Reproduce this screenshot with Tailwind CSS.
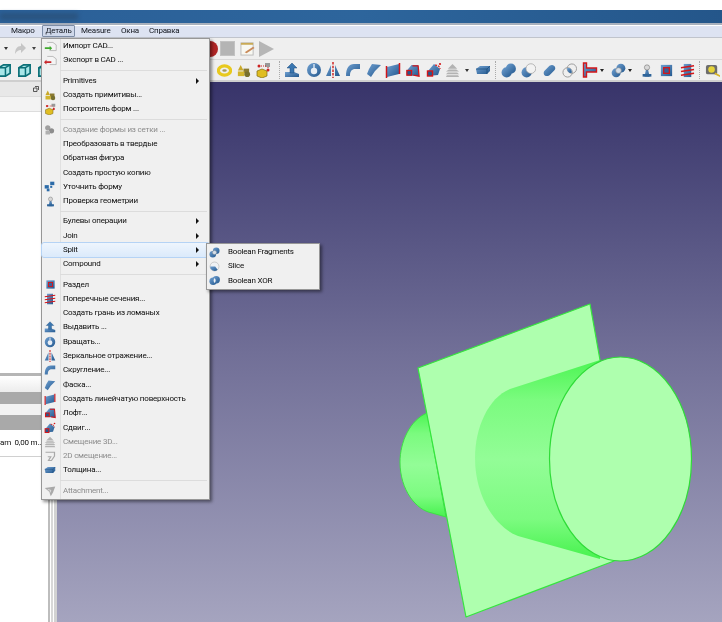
<!DOCTYPE html>
<html lang="ru">
<head>
<meta charset="utf-8">
<script src="https://cdn.jsdelivr.net/npm/@tailwindcss/browser@4"></script>
</head>
<body class="bg-white">
<svg class="absolute w-0 h-0">
<defs>
<linearGradient id="b" x1="0" y1="0" x2="1" y2="1"><stop offset="0" stop-color="#6f9fd0"/><stop offset="1" stop-color="#24598f"/></linearGradient>
<symbol id="cube" viewBox="0 0 16 16"><path d="M2 5 7 2h7v9l-5 3H2z" fill="#a8e6e8" stroke="#0b6f77" stroke-width="1.800"/><path d="M2 5h7v9M9 5l5-3" fill="none" stroke="#0b6f77" stroke-width="1.600"/></symbol>
<symbol id="torus" viewBox="0 0 16 16"><ellipse cx="8" cy="8" rx="6.500" ry="5" fill="none" stroke="#e8c91e" stroke-width="3.400"/><ellipse cx="8" cy="8" rx="2.400" ry="1.400" fill="#a59a5a"/></symbol>
<symbol id="prims" viewBox="0 0 16 16"><path d="M5 2 8 8H2z" fill="#c9a92a"/><rect x="8" y="6" width="6" height="5" fill="#8a7a30"/><rect x="2" y="9" width="7" height="5" fill="#d2b52e"/><circle cx="12" cy="12" r="3" fill="#77702f"/></symbol>
<symbol id="builder" viewBox="0 0 16 16"><path d="M2 9l5-2 5 2v5l-5 2-5-2z" fill="#e0bd22" stroke="#7d6a15" stroke-width=".7"/><rect x="10" y="1" width="5" height="4" fill="#999"/><circle cx="4" cy="4" r="1.500" fill="#c22"/><circle cx="13" cy="8" r="1.500" fill="#c22"/><path d="M4 4h7M13 5v3" stroke="#c22" stroke-dasharray="1 1"/></symbol>
<symbol id="extrude" viewBox="0 0 16 16"><path d="M1 10h9l5 2v3H1z" fill="url(#b)"/><path d="M8 1 3 6h3v5h4V6h3z" fill="#3a76b0" stroke="#1d4d7e" stroke-width=".5"/></symbol>
<symbol id="revolve" viewBox="0 0 16 16"><circle cx="8" cy="8" r="7" fill="url(#b)"/><circle cx="8" cy="9" r="3.200" fill="#e8eef5"/><path d="M8 2v4" stroke="#dfe8f2" stroke-width="1.400"/></symbol>
<symbol id="mirror" viewBox="0 0 16 16"><path d="M1 14 6 3v11zM15 14 10 3v11z" fill="url(#b)"/><path d="M8 0v16" stroke="#cc1a1a" stroke-width="1.400" stroke-dasharray="2.500 1.200"/></symbol>
<symbol id="fillet" viewBox="0 0 16 16"><path d="M15 2H9C4 2 1 6 1 14h4c0-4 1-6 4-7h6z" fill="url(#b)"/></symbol>
<symbol id="chamfer" viewBox="0 0 16 16"><path d="M6 2 15 3 9 9 5 15 1 12 3 7z" fill="url(#b)"/></symbol>
<symbol id="ruled" viewBox="0 0 16 16"><path d="M2 5 14 2v10L2 15z" fill="url(#b)"/><path d="M1.500 4v12M14.500 1v11" stroke="#d3161a" stroke-width="1.500"/></symbol>
<symbol id="loft" viewBox="0 0 16 16"><path d="M2 8 7 2h7l1 12-13-1z" fill="url(#b)"/><path d="M8 3h6l1 11-6-1" fill="none" stroke="#d3161a" stroke-width="1.400"/><rect x="2" y="8" width="5" height="5" fill="#24598f" stroke="#d3161a" stroke-width="1.400"/></symbol>
<symbol id="sweep" viewBox="0 0 16 16"><path d="M2 9 8 2l6 5-2 6-10 1z" fill="url(#b)"/><rect x="1.500" y="9" width="5" height="5" fill="#24598f" stroke="#d3161a" stroke-width="1.400"/><path d="M9 3c3 0 5 2 5 4" fill="none" stroke="#d3161a" stroke-width="1.200" stroke-dasharray="2 1"/><circle cx="14" cy="2" r="1.100" fill="#d3161a"/></symbol>
<symbol id="offset" viewBox="0 0 16 16"><path d="M8 1 3 6h10zM4 7h8l3 2H1zM3 10h10l2 2H1zM2 13h12l1 2H1z" fill="#b3b3b3"/></symbol>
<symbol id="offset2" viewBox="0 0 16 16"><path d="M2 3h12v5l-4 6H6l3-5H5" fill="none" stroke="#a8a8a8" stroke-width="1.600"/></symbol>
<symbol id="thick" viewBox="0 0 16 16"><path d="M1 7l4-3h10v5l-3 3H2z" fill="url(#b)"/><path d="M1 7h11l3-3M12 7v5" fill="none" stroke="#174a7a" stroke-width=".7"/></symbol>
<symbol id="union" viewBox="0 0 16 16"><circle cx="6" cy="10" r="5.400" fill="url(#b)"/><circle cx="10.500" cy="6" r="5.400" fill="url(#b)"/></symbol>
<symbol id="cut" viewBox="0 0 16 16"><circle cx="6" cy="10" r="5.400" fill="url(#b)"/><circle cx="10.500" cy="6" r="5.200" fill="#f2f2f2" stroke="#999" stroke-width=".7"/></symbol>
<symbol id="fuse" viewBox="0 0 16 16"><path d="M3 8 8 3c5-3 8 3 5 5l-5 5C3 16 0 11 3 8z" fill="url(#b)"/></symbol>
<symbol id="common" viewBox="0 0 16 16"><circle cx="6" cy="10" r="5" fill="none" stroke="#999"/><circle cx="10.500" cy="6" r="5" fill="none" stroke="#999"/><path d="M5.500 5.500c3-.5 5 1 5 5-3 .5-5-1-5-5z" fill="url(#b)"/></symbol>
<symbol id="tee" viewBox="0 0 16 16"><path d="M1.500 1v14h3V10h10V6H4.500V1z" fill="url(#b)" stroke="#d3161a" stroke-width="1.400"/></symbol>
<symbol id="frags" viewBox="0 0 16 16"><circle cx="5.500" cy="10.500" r="4.800" fill="url(#b)"/><circle cx="10.500" cy="5.500" r="4.800" fill="url(#b)"/><circle cx="8" cy="8" r="3" fill="#d5dee8" stroke="#888" stroke-width=".6"/></symbol>
<symbol id="slice" viewBox="0 0 16 16"><circle cx="8" cy="8" r="6.500" fill="#eef1f4" stroke="#aaa" stroke-width=".8"/><path d="M1.500 8a6.500 6.500 0 0 0 11 4.700L9 8z" fill="url(#b)"/></symbol>
<symbol id="xor" viewBox="0 0 16 16"><circle cx="6" cy="9" r="5.400" fill="url(#b)"/><circle cx="10.500" cy="7" r="5.400" fill="url(#b)"/><path d="M8.200 4.500c2 2 2 5 0 7-2-2-2-5 0-7z" fill="#eef1f4"/></symbol>
<symbol id="check" viewBox="0 0 16 16"><path d="M5 15 7 6h2l2 9z" fill="url(#b)"/><rect x="3" y="12" width="10" height="3" fill="#2e6499"/><circle cx="8" cy="4.500" r="3" fill="#d8d8d8" stroke="#666" stroke-width=".6"/></symbol>
<symbol id="section" viewBox="0 0 16 16"><rect x="2" y="2" width="12" height="12" fill="url(#b)"/><rect x="5" y="5" width="6" height="6" fill="#36609a" stroke="#d3161a" stroke-width="1.400"/></symbol>
<symbol id="cross" viewBox="0 0 16 16"><rect x="4" y="1" width="8" height="14" fill="url(#b)"/><path d="M1 5l14-2M1 9l14-2M1 13l14-2" stroke="#d3161a" stroke-width="1.600"/></symbol>
<symbol id="refine" viewBox="0 0 16 16"><rect x="1" y="6" width="6" height="5" fill="#2c6ba8"/><rect x="9" y="1" width="6" height="5" fill="#2c6ba8"/><rect x="4" y="11" width="4" height="4" fill="#2c6ba8"/><rect x="9" y="7" width="3" height="3" fill="#2c6ba8"/></symbol>
<symbol id="mesh" viewBox="0 0 16 16"><circle cx="5" cy="5" r="3.500" fill="#a0a0a0"/><circle cx="10" cy="9" r="3.500" fill="#8d8d8d"/><rect x="2" y="9" width="6" height="5" fill="#b0b0b0"/></symbol>
<symbol id="import" viewBox="0 0 16 16"><path d="M4 3h7l4 3v7H7" fill="#f4f4f4" stroke="#a0a0a0" stroke-width=".8"/><path d="M1 9h6V7l3 3-3 3v-2H1z" fill="#3faa2e"/></symbol>
<symbol id="export" viewBox="0 0 16 16"><path d="M4 3h7l4 3v7H7" fill="#f4f4f4" stroke="#a0a0a0" stroke-width=".8"/><path d="M9 9H3V7L0 10l3 3v-2h6z" fill="#c9272b"/></symbol>
<symbol id="attach" viewBox="0 0 16 16"><path d="M1 4l14-2-3 8-3 5-2-6z" fill="#a9a9a9"/><path d="M5 6l4 1-1 3" fill="none" stroke="#eee"/></symbol>
<symbol id="tape" viewBox="0 0 16 16"><rect x="1" y="2" width="12" height="10" rx="2" fill="#6d6d6d"/><circle cx="7" cy="7" r="3.500" fill="#e6d43a"/><path d="M10 12l6 3v-2l-5-3z" fill="#d8b52a"/></symbol>
<symbol id="note" viewBox="0 0 16 16"><rect x="1" y="2" width="13" height="13" fill="#f8f8f2" stroke="#b9b9b9"/><path d="M1 2h13v2H1z" fill="#c9aa55"/><path d="M5 12 14 6l1.500 1.500L7 13z" fill="#c98a5a"/></symbol>
</defs>
</svg>

<div class="relative w-[722px] h-[622px] overflow-hidden bg-white font-['Roboto','Noto_Sans',sans-serif] text-[8px] tracking-[-0.2px] text-[#0c0c0c] blur-[0.3px]">
  <div class="h-[10px] bg-white"></div>
  <div class="h-[13px] bg-gradient-to-r from-[#2b6098] via-[#2d659c] to-[#24568a] pt-[3px]">
    <div class="w-[78px] h-[7px] bg-[#2a5480] blur-[2px]"></div>
  </div>
  <div class="h-[2px] bg-[#a9b1bd]"></div>
  <div class="h-[1px] bg-white"></div>

  <nav class="h-[11px] bg-[#dde3f2] flex items-center text-[#12161e] leading-none">
    <span class="ml-[11px] w-[31px] -mt-[1px]">Макро</span>
    <span class="w-[33px] h-[12px] flex items-center justify-center border border-[#7d8da6] bg-[#cfd8ea] rounded-[1px] -mt-[1px]">Деталь</span>
    <span class="ml-[6px] w-[40px] -mt-[1px]">Measure</span>
    <span class="w-[28px] -mt-[1px]">Окна</span>
    <span class="-mt-[1px]">Справка</span>
  </nav>
  <div class="h-[1px] bg-[#c0c4cc]"></div>

  <div class="h-[22px] bg-[#efefef] flex items-center border-b border-[#d8d8d8]">
    <span class="ml-[4px] w-0 h-0 border-x-[2px] border-x-transparent border-t-[3px] border-t-[#333]"></span>
    <svg class="w-[13px] h-[12px] ml-[6px]" viewBox="0 0 13 12"><path d="M12 5 7 0v3C3 3 1 6 1 11c2-3 3-4 6-4v3z" fill="#c6c6c6"/></svg>
    <span class="ml-[5px] w-0 h-0 border-x-[2px] border-x-transparent border-t-[3px] border-t-[#444]"></span>
    <span class="ml-[166px] w-[16px] h-[16px] rounded-full bg-[#b02525]"></span>
    <span class="ml-[2px] w-[15px] h-[15px] bg-[#b4b4b4] border border-[#c2c2c2]"></span>
    <svg class="w-[15px] h-[15px] ml-[5px]"><use href="#note"/></svg>
    <svg class="w-[15px] h-[16px] ml-[4px]" viewBox="0 0 15 16"><path d="M0 0 15 8 0 16z" fill="#b6b6b6"/></svg>
  </div>

  <div class="h-[22px] bg-[#efefef] flex items-center border-b-2 border-[#cfcfcf]">
    <svg class="w-[15px] h-[15px] ml-[-3px]"><use href="#cube"/></svg>
    <svg class="w-[15px] h-[15px] ml-[5px]"><use href="#cube"/></svg>
    <svg class="w-[15px] h-[15px] ml-[5px]"><use href="#cube"/></svg>
    <svg class="w-[15px] h-[15px] ml-[165px]"><use href="#torus"/></svg>
    <svg class="w-[15px] h-[15px] ml-[4px]"><use href="#prims"/></svg>
    <svg class="w-[16px] h-[16px] ml-[4px]"><use href="#builder"/></svg>
    <span class="ml-[8px] w-[1px] h-[18px] border-l border-dotted border-[#aaa]"></span>
    <svg class="w-[16px] h-[16px] ml-[4px]"><use href="#extrude"/></svg>
    <svg class="w-[16px] h-[16px] ml-[6px]"><use href="#revolve"/></svg>
    <svg class="w-[16px] h-[16px] ml-[3px]"><use href="#mirror"/></svg>
    <svg class="w-[16px] h-[16px] ml-[4px]"><use href="#fillet"/></svg>
    <svg class="w-[16px] h-[16px] ml-[5px]"><use href="#chamfer"/></svg>
    <svg class="w-[16px] h-[16px] ml-[3px]"><use href="#ruled"/></svg>
    <svg class="w-[15px] h-[15px] ml-[4px]"><use href="#loft"/></svg>
    <svg class="w-[16px] h-[16px] ml-[6px]"><use href="#sweep"/></svg>
    <svg class="w-[15px] h-[15px] ml-[3px]"><use href="#offset"/></svg>
    <span class="ml-[5px] w-0 h-0 border-x-[2px] border-x-transparent border-t-[3px] border-t-[#333]"></span>
    <svg class="w-[16px] h-[16px] ml-[6px]"><use href="#thick"/></svg>
    <span class="ml-[4px] w-[1px] h-[18px] border-l border-dotted border-[#aaa]"></span>
    <svg class="w-[15px] h-[15px] ml-[5px]"><use href="#union"/></svg>
    <svg class="w-[15px] h-[15px] ml-[5px]"><use href="#cut"/></svg>
    <svg class="w-[15px] h-[15px] ml-[6px]"><use href="#fuse"/></svg>
    <svg class="w-[15px] h-[15px] ml-[5px]"><use href="#common"/></svg>
    <svg class="w-[16px] h-[16px] ml-[5px]"><use href="#tee"/></svg>
    <span class="ml-[2px] w-0 h-0 border-x-[2px] border-x-transparent border-t-[3px] border-t-[#222]"></span>
    <svg class="w-[15px] h-[15px] ml-[7px]"><use href="#frags"/></svg>
    <span class="ml-[2px] w-0 h-0 border-x-[2px] border-x-transparent border-t-[3px] border-t-[#222]"></span>
    <svg class="w-[14px] h-[15px] ml-[8px]"><use href="#check"/></svg>
    <svg class="w-[15px] h-[15px] ml-[5px]"><use href="#section"/></svg>
    <svg class="w-[15px] h-[15px] ml-[6px]"><use href="#cross"/></svg>
    <span class="ml-[4px] w-[1px] h-[18px] border-l border-dotted border-[#aaa]"></span>
    <svg class="w-[15px] h-[15px] ml-[5px] shrink-0"><use href="#tape"/></svg>
  </div>

  <main class="flex h-[540px]">
    <aside class="w-[48px] flex flex-col shrink-0 bg-white">
      <div class="h-[14px] bg-[#e8e8e8] flex items-center justify-end pr-[9px]">
        <svg class="w-[6px] h-[6px]" viewBox="0 0 6 6"><path d="M2 .5h3.500V4M.5 2h3.500v3.500H.5z" fill="none" stroke="#333" stroke-width=".8"/></svg>
      </div>
      <div class="h-[16px] bg-[#f3f3f3] border-y border-[#ddd]"></div>
      <div class="h-[261px]"></div>
      <div class="h-[3px] bg-[#b5b5b5]"></div>
      <div class="h-[16px] bg-gradient-to-b from-white to-[#ececec]"></div>
      <div class="h-[12px] bg-[#a9a9a9]"></div>
      <div class="h-[11px] bg-[#f2f2f2]"></div>
      <div class="h-[15px] bg-[#a9a9a9]"></div>
      <div class="h-[27px] border-b border-[#d0d0d0] flex items-center whitespace-nowrap overflow-hidden">am&nbsp; 0,00 m...</div>
    </aside>
    <div class="w-[9px] shrink-0 flex">
      <span class="w-[2px] bg-[#bdbdbd]"></span>
      <span class="w-[1px] bg-white"></span>
      <span class="w-[2px] bg-[#d8d8d8]"></span>
      <span class="w-[1px] bg-white"></span>
      <span class="w-[3px] bg-[#d2d2d2]"></span>
    </div>
    <section class="relative flex-1 bg-gradient-to-b from-[#38346a] via-[#716f97] to-[#a5a4bf]">
      <svg class="absolute left-0 top-0 w-[665px] h-[540px]" viewBox="57 82 665 540">
        <defs>
          <linearGradient id="cyl" x1="0" y1="0" x2="0" y2="1"><stop offset="0" stop-color="#4cf553"/><stop offset=".2" stop-color="#7bfb7f"/><stop offset=".5" stop-color="#93fd97"/><stop offset=".8" stop-color="#7cfb80"/><stop offset="1" stop-color="#47f24e"/></linearGradient>
        </defs>
        <path d="M427 413C410 420 400 442 400 462C400 490 416 510 432 513L446 517Z" fill="url(#cyl)" stroke="#3fe045"/>
        <path d="M418 368 590 304 600 360 614 561 466 617Z" fill="#aeffae" stroke="#35e63d" stroke-width="1.200" stroke-linejoin="round"/>
        <path d="M600 360 510 389C488 398 475 428 475 458C475 494 493 526 518 536L600 559Z" fill="url(#cyl)"/>
        <ellipse cx="620.500" cy="459" rx="71" ry="102" fill="#aeffae" stroke="#2fdc38" stroke-width="1.200"/>
      </svg>
    </section>
  </main>

  <!-- Выпадающее меню -->
  <div class="absolute left-[41px] top-[38px] w-[169px] h-[462px] bg-[#f0f0f0] border border-[#979797] shadow-[2px_2px_3px_rgba(0,0,0,0.45)] leading-none">
    <span class="absolute left-[18px] top-0 bottom-0 w-[1px] bg-[#e0e0e0]"></span>
    <div class="relative flex flex-col">
      <div class="h-[14.3px] flex items-center"><svg class="w-[13px] h-[13px] ml-[2px] mr-[6px]"><use href="#import"/></svg>Импорт CAD...</div>
      <div class="h-[14.3px] flex items-center"><svg class="w-[13px] h-[13px] ml-[2px] mr-[6px]"><use href="#export"/></svg>Экспорт в CAD ...</div>
      <div class="h-[6px] flex items-center pl-[18px] pr-[2px]"><span class="h-[1px] flex-1 bg-[#dcdcdc]"></span></div>
      <div class="h-[14.3px] flex items-center pl-[21px]"><span class="flex-1">Primitives</span><span class="mr-[10px] w-0 h-0 border-y-[3px] border-y-transparent border-l-[3px] border-l-[#111]"></span></div>
      <div class="h-[14.3px] flex items-center"><svg class="w-[12px] h-[12px] ml-[2px] mr-[7px]"><use href="#prims"/></svg>Создать примитивы...</div>
      <div class="h-[14.3px] flex items-center"><svg class="w-[12px] h-[12px] ml-[2px] mr-[7px]"><use href="#builder"/></svg>Построитель форм ...</div>
      <div class="h-[6px] flex items-center pl-[18px] pr-[2px]"><span class="h-[1px] flex-1 bg-[#dcdcdc]"></span></div>
      <div class="h-[14.3px] flex items-center text-[#8c8c8c]"><svg class="w-[12px] h-[12px] ml-[2px] mr-[7px]"><use href="#mesh"/></svg>Создание формы из сетки ...</div>
      <div class="h-[14.3px] flex items-center pl-[21px]">Преобразовать в твердые</div>
      <div class="h-[14.3px] flex items-center pl-[21px]">Обратная фигура</div>
      <div class="h-[14.3px] flex items-center pl-[21px]">Создать простую копию</div>
      <div class="h-[14.3px] flex items-center"><svg class="w-[11px] h-[11px] ml-[2px] mr-[8px]"><use href="#refine"/></svg>Уточнить форму</div>
      <div class="h-[14.3px] flex items-center"><svg class="w-[11px] h-[11px] ml-[3px] mr-[7px]"><use href="#check"/></svg>Проверка геометрии</div>
      <div class="h-[6px] flex items-center pl-[18px] pr-[2px]"><span class="h-[1px] flex-1 bg-[#dcdcdc]"></span></div>
      <div class="h-[14.3px] flex items-center pl-[21px]"><span class="flex-1">Булевы операции</span><span class="mr-[10px] w-0 h-0 border-y-[3px] border-y-transparent border-l-[3px] border-l-[#111]"></span></div>
      <div class="h-[14.3px] flex items-center pl-[21px]"><span class="flex-1">Join</span><span class="mr-[10px] w-0 h-0 border-y-[3px] border-y-transparent border-l-[3px] border-l-[#111]"></span></div>
      <div class="h-[14.3px] flex items-center pl-[21px] bg-gradient-to-b from-[#eef5fd] to-[#dbeafb] outline outline-1 outline-[#b5d3f5] rounded-[2px]"><span class="flex-1">Split</span><span class="mr-[10px] w-0 h-0 border-y-[3px] border-y-transparent border-l-[3px] border-l-[#111]"></span></div>
      <div class="h-[14.3px] flex items-center pl-[21px]"><span class="flex-1">Compound</span><span class="mr-[10px] w-0 h-0 border-y-[3px] border-y-transparent border-l-[3px] border-l-[#111]"></span></div>
      <div class="h-[6px] flex items-center pl-[18px] pr-[2px]"><span class="h-[1px] flex-1 bg-[#dcdcdc]"></span></div>
      <div class="h-[14.3px] flex items-center"><svg class="w-[11px] h-[11px] ml-[3px] mr-[7px]"><use href="#section"/></svg>Раздел</div>
      <div class="h-[14.3px] flex items-center"><svg class="w-[12px] h-[12px] ml-[2px] mr-[7px]"><use href="#cross"/></svg>Поперечные сечения...</div>
      <div class="h-[14.3px] flex items-center pl-[21px]">Создать грань из ломаных</div>
      <div class="h-[14.3px] flex items-center"><svg class="w-[12px] h-[12px] ml-[2px] mr-[7px]"><use href="#extrude"/></svg>Выдавить ...</div>
      <div class="h-[14.3px] flex items-center"><svg class="w-[12px] h-[12px] ml-[2px] mr-[7px]"><use href="#revolve"/></svg>Вращать...</div>
      <div class="h-[14.3px] flex items-center"><svg class="w-[12px] h-[12px] ml-[2px] mr-[7px]"><use href="#mirror"/></svg>Зеркальное отражение...</div>
      <div class="h-[14.3px] flex items-center"><svg class="w-[12px] h-[12px] ml-[2px] mr-[7px]"><use href="#fillet"/></svg>Скругление...</div>
      <div class="h-[14.3px] flex items-center"><svg class="w-[12px] h-[12px] ml-[2px] mr-[7px]"><use href="#chamfer"/></svg>Фаска...</div>
      <div class="h-[14.3px] flex items-center"><svg class="w-[12px] h-[12px] ml-[2px] mr-[7px]"><use href="#ruled"/></svg>Создать линейчатую поверхность</div>
      <div class="h-[14.3px] flex items-center"><svg class="w-[12px] h-[12px] ml-[2px] mr-[7px]"><use href="#loft"/></svg>Лофт...</div>
      <div class="h-[14.3px] flex items-center"><svg class="w-[12px] h-[12px] ml-[2px] mr-[7px]"><use href="#sweep"/></svg>Сдвиг...</div>
      <div class="h-[14.3px] flex items-center text-[#8c8c8c]"><svg class="w-[12px] h-[12px] ml-[2px] mr-[7px]"><use href="#offset"/></svg>Смещение 3D...</div>
      <div class="h-[14.3px] flex items-center text-[#8c8c8c]"><svg class="w-[12px] h-[12px] ml-[2px] mr-[7px]"><use href="#offset2"/></svg>2D смещение...</div>
      <div class="h-[14.3px] flex items-center"><svg class="w-[12px] h-[12px] ml-[2px] mr-[7px]"><use href="#thick"/></svg>Толщина...</div>
      <div class="h-[6px] flex items-center pl-[18px] pr-[2px]"><span class="h-[1px] flex-1 bg-[#dcdcdc]"></span></div>
      <div class="h-[14.3px] flex items-center text-[#8c8c8c]"><svg class="w-[12px] h-[12px] ml-[2px] mr-[7px]"><use href="#attach"/></svg>Attachment...</div>
    </div>
  </div>

  <!-- Подменю Split -->
  <div class="absolute left-[206px] top-[243px] w-[114px] h-[47px] bg-[#f0f0f0] border border-[#979797] shadow-[2px_2px_3px_rgba(0,0,0,0.45)] py-[1px] flex flex-col leading-none">
    <div class="h-[14.3px] flex items-center"><svg class="w-[11px] h-[11px] ml-[2px] mr-[8px]"><use href="#frags"/></svg>Boolean Fragments</div>
    <div class="h-[14.3px] flex items-center"><svg class="w-[11px] h-[11px] ml-[2px] mr-[8px]"><use href="#slice"/></svg>Slice</div>
    <div class="h-[14.3px] flex items-center"><svg class="w-[11px] h-[11px] ml-[2px] mr-[8px]"><use href="#xor"/></svg>Boolean XOR</div>
  </div>
</div>
</body>
</html>
